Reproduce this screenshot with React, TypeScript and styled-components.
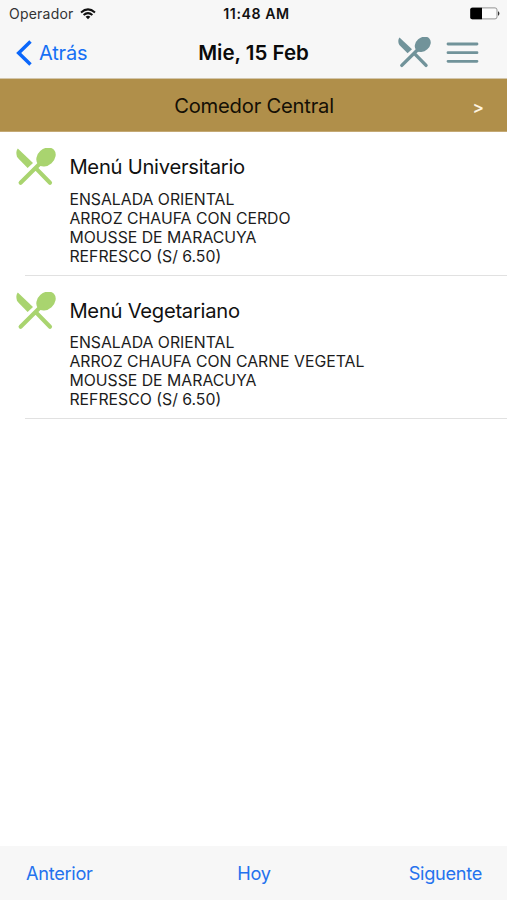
import React from "react";
import styled, { createGlobalStyle } from "styled-components";

const GlobalStyle = createGlobalStyle`
  * { box-sizing: border-box; }
  body { margin: 0; background: #fff; }
  button { border: 0; padding: 0; background: none; font: inherit; color: inherit; }
`;

const Screen = styled.div`
  display: flex;
  flex-direction: column;
  width: 507px;
  height: 900px;
  overflow: hidden;
  background: #fff;
  color: #111;
  font-family: Inter, "Liberation Sans", sans-serif;
  white-space: nowrap;
`;

const StatusBar = styled.div`
  display: grid;
  grid-template-columns: 1fr auto 1fr;
  align-items: center;
  height: 27px;
  padding: 0 7px 0 9px;
  background: #f7f7f7;
`;

const Carrier = styled.div`
  display: flex;
  align-items: center;
  gap: 6px;
  font-size: 14px;
  letter-spacing: 0.22px;
  color: #333;
`;

const Clock = styled.div`
  margin-left: 4px;
  font-size: 14.2px;
  font-weight: 600;
  letter-spacing: 0.55px;
  color: #111;
`;

const Battery = styled.div`
  display: flex;
  justify-content: flex-end;
`;

const NavBar = styled.header`
  display: grid;
  grid-template-columns: 1fr auto 1fr;
  align-items: center;
  height: 52px;
  padding: 0 16px;
  background: #f7f7f7;
  border-bottom: 1px solid #d3c6ab;
`;

const BackButton = styled.button`
  display: flex;
  align-items: center;
  gap: 7px;
  font-size: 20px;
  letter-spacing: -0.2px;
  color: #1670f5;
`;

const Title = styled.h1`
  margin: 0;
  font-size: 20.5px;
  font-weight: 600;
  letter-spacing: 0;
  color: #0a0a0a;
`;

const Actions = styled.div`
  display: flex;
  align-items: center;
  justify-content: flex-end;
  gap: 15px;
  margin-right: 12px;
`;

const SectionBar = styled.div`
  display: grid;
  grid-template-columns: 1fr auto 1fr;
  align-items: center;
  height: 53px;
  padding: 1px 23px 0 24px;
  background: #b08f4a;
  border-bottom: 1px solid #c4a974;
`;

const SectionName = styled.h2`
  grid-column: 2;
  margin: 0;
  font-size: 20.2px;
  font-weight: 400;
  letter-spacing: -0.22px;
  color: #140f05;
`;

const SectionArrow = styled.button`
  justify-self: end;
  padding-top: 2px;
  font-size: 17px;
  font-weight: 600;
  color: #fff4e0;
`;

const MenuList = styled.main`
  flex: 1;
`;

const MenuItem = styled.article`
  display: flex;
  height: 143.7px;
  padding: 16px 0 0 16px;
  background: linear-gradient(#e1e1e1, #e1e1e1) 25px 100% / 100% 1px no-repeat;
`;

const MenuText = styled.div`
  margin-left: 13.4px;
`;

const MenuName = styled.h3`
  margin: 6px 0 10.8px;
  font-size: 20.2px;
  font-weight: 400;
  line-height: 26px;
  letter-spacing: -0.26px;
`;

const Dish = styled.p`
  margin: 0;
  font-size: 15.8px;
  line-height: 18.9px;
  color: #1c1c1c;
`;

const Toolbar = styled.footer`
  display: grid;
  grid-template-columns: 1fr auto 1fr;
  align-items: center;
  height: 54px;
  padding: 0 25px 0 26px;
  background: #f7f7f7;
  font-size: 18.2px;
  letter-spacing: -0.3px;
  color: #2472ee;
`;

const ToolbarButton = styled.button<{ $align?: string }>`
  justify-self: ${(p) => p.$align ?? "center"};
  letter-spacing: inherit;
`;

function CutleryIcon({ color, width, height }: { color: string; width: number; height: number }) {
  return (
    <svg width={width} height={height} viewBox="0 0 40 38" preserveAspectRatio="none" fill={color} stroke={color}>
      <path stroke="none" d="M1.8.5C.3 2.200-.1 5.500.9 8.200c.4 1 1.100 1.800 1.900 2.700l8.800 9 5.400-5z" />
      <ellipse stroke="none" cx="30" cy="9" rx="10.700" ry="8.300" transform="rotate(-42 30 9)" />
      <path fill="none" strokeWidth="4.100" strokeLinecap="round" d="M26 13.500 4.600 34.800M20 20.400l14 14.400" />
    </svg>
  );
}

const menus = [
  {
    name: "Menú Universitario",
    dishes: ["ENSALADA ORIENTAL", "ARROZ CHAUFA CON CERDO", "MOUSSE DE MARACUYA", "REFRESCO (S/ 6.50)"],
  },
  {
    name: "Menú Vegetariano",
    dishes: ["ENSALADA ORIENTAL", "ARROZ CHAUFA CON CARNE VEGETAL", "MOUSSE DE MARACUYA", "REFRESCO (S/ 6.50)"],
  },
];

export default function App() {
  return (
    <Screen>
      <GlobalStyle />
      <StatusBar>
        <Carrier>
          Operador
          <svg width="16" height="12" viewBox="0 0 16 12" fill="none" stroke="#111" strokeWidth="2">
            <path d="M1 4.4Q8-1.6 15 4.4M3.6 7Q8 3.2 12.4 7" />
            <path d="M5.6 8.7Q8 6.7 10.4 8.7L8 11.3z" fill="#111" stroke="none" />
          </svg>
        </Carrier>
        <Clock>11:48 AM</Clock>
        <Battery>
          <svg width="31" height="13" viewBox="0 0 31 13">
            <rect x="1.500" y=".9" width="26.500" height="11" rx="2" fill="#fbfbfb" stroke="#888" strokeWidth=".9" />
            <path d="M3 .8H13v11.400H3Q1.300 12.200 1.300 10.500v-8Q1.300.8 3 .8z" fill="#000" />
            <path d="M29 4.300q1.400.5 1.400 2.200t-1.400 2.200z" fill="#333" />
          </svg>
        </Battery>
      </StatusBar>
      <NavBar>
        <BackButton>
          <svg width="16" height="26" viewBox="0 0 16 26" fill="none" stroke="#0b67fb" strokeWidth="3.500">
            <path d="M14.500 1.600 2.700 13l11.800 11.400" />
          </svg>
          Atrás
        </BackButton>
        <Title>Mie, 15 Feb</Title>
        <Actions>
          <CutleryIcon color="#71939a" width={33} height={31} />
          <svg width="33" height="22" viewBox="0 0 33 22" stroke="#71939a" strokeWidth="2.800" strokeLinecap="round">
            <path d="M2 2h29M2 10.700h29M2 19.300h29" />
          </svg>
        </Actions>
      </NavBar>
      <SectionBar>
        <SectionName>Comedor Central</SectionName>
        <SectionArrow>&gt;</SectionArrow>
      </SectionBar>
      <MenuList>
        {menus.map((menu) => (
          <MenuItem key={menu.name}>
            <CutleryIcon color="#a9d46f" width={40} height={38} />
            <MenuText>
              <MenuName>{menu.name}</MenuName>
              {menu.dishes.map((dish) => (
                <Dish key={dish}>{dish}</Dish>
              ))}
            </MenuText>
          </MenuItem>
        ))}
      </MenuList>
      <Toolbar>
        <ToolbarButton $align="start">Anterior</ToolbarButton>
        <ToolbarButton>Hoy</ToolbarButton>
        <ToolbarButton $align="end">Siguente</ToolbarButton>
      </Toolbar>
    </Screen>
  );
}
